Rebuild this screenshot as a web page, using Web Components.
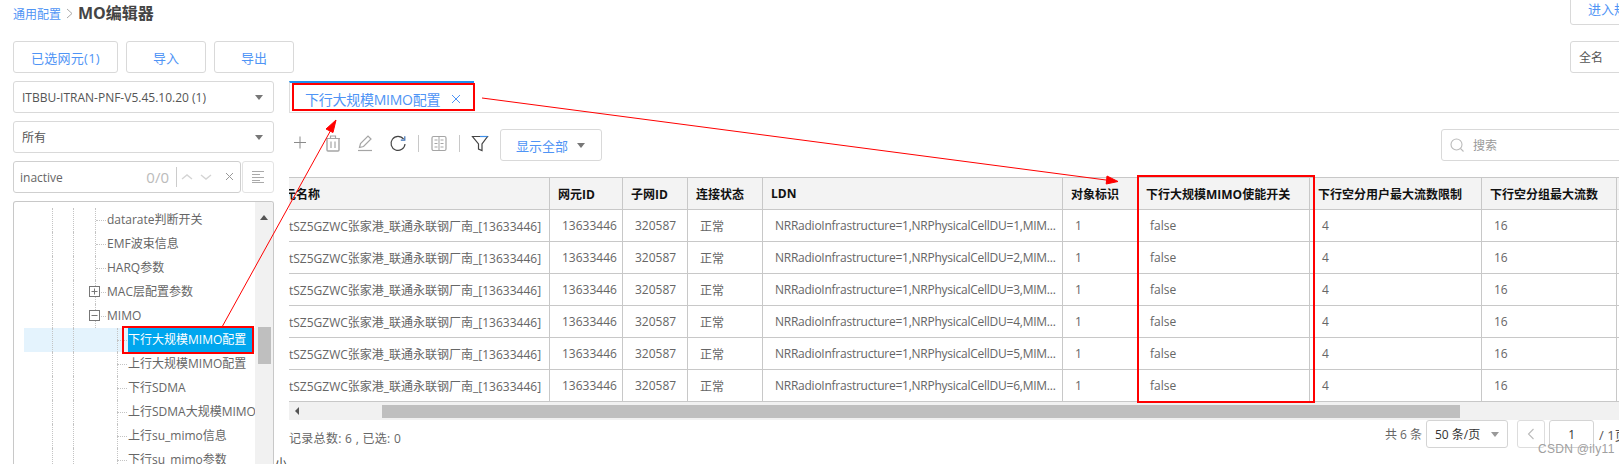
<!DOCTYPE html>
<html lang="zh">
<head>
<meta charset="utf-8">
<title>MO编辑器</title>
<style>
  html, body { margin: 0; height: 100%; overflow: hidden; background: #fff; }
  body { font: 12px "Open Sans", "Noto Sans CJK SC", sans-serif; color: #666; }
</style>
</head>
<body>
<mo-page></mo-page>
<script>
const FONT = `"Open Sans", "Noto Sans CJK SC", sans-serif`;
const BLUE = '#4f94f5';

class ToolButton extends HTMLElement {
  constructor() {
    super();
    this.attachShadow({ mode: 'open' });
    this.shadowRoot.innerHTML = `
      <style>
        :host {
          display: inline-flex;
          align-items: center;
          justify-content: center;
          box-sizing: border-box;
          height: 32px;
          border: 1px solid #d9d9d9;
          border-radius: 3px;
          color: ${BLUE};
          font-size: 13px;
          white-space: nowrap;
          background: #fff;
        }
      </style>
      <slot></slot>
    `;
  }
}
customElements.define('tool-button', ToolButton);

class DropSelect extends HTMLElement {
  constructor() {
    super();
    this.attachShadow({ mode: 'open' });
    this.shadowRoot.innerHTML = `
      <style>
        :host {
          display: flex;
          align-items: center;
          box-sizing: border-box;
          height: 32px;
          padding: 0 10px 0 8px;
          border: 1px solid #d9d9d9;
          border-radius: 3px;
          color: #555;
          font-size: 12px;
          background: #fff;
        }
        .text { flex: 1; white-space: nowrap; overflow: hidden; }
        .caret {
          width: 0; height: 0;
          border-left: 4px solid transparent;
          border-right: 4px solid transparent;
          border-top: 5px solid #777;
        }
      </style>
      <span class="text"><slot></slot></span>
      <span class="caret"></span>
    `;
  }
}
customElements.define('drop-select', DropSelect);

class FindBar extends HTMLElement {
  constructor() {
    super();
    this.attachShadow({ mode: 'open' });
    this.shadowRoot.innerHTML = `
      <style>
        :host { display: flex; gap: 1px; height: 32px; }
        .box {
          flex: 1;
          display: flex;
          align-items: center;
          box-sizing: border-box;
          padding-left: 6px;
          border: 1px solid #cfcfcf;
          border-radius: 3px;
          color: #666;
        }
        .word { flex: 1; }
        .count { color: #bbb; font-size: 15px; }
        .line { width: 1px; height: 20px; background: #ccc; margin: 0 0 0 7px; }
        svg { display: block; }
        .side {
          width: 32px;
          box-sizing: border-box;
          display: flex;
          align-items: center;
          justify-content: center;
          border: 1px solid #e3e3e3;
          border-radius: 3px;
        }
      </style>
      <div class="box">
        <span class="word">inactive</span>
        <span class="count">0/0</span>
        <span class="line"></span>
        <svg width="63" height="14" viewBox="0 0 63 14" fill="none" stroke-width="1.4">
          <path d="M5 9l5-4 5 4" stroke="#d4d4d4"/>
          <path d="M24 5l5 4 5-4" stroke="#d4d4d4"/>
          <path d="M49 3l7 7M56 3l-7 7" stroke="#999" stroke-width="1"/>
        </svg>
      </div>
      <div class="side">
        <svg width="14" height="12" viewBox="0 0 14 12" fill="none" stroke="#aaa">
          <path d="M1 .5h12M1 3.5h8M1 6.5h12M1 9.5h8M1 11.5h12"/>
        </svg>
      </div>
    `;
  }
}
customElements.define('find-bar', FindBar);

// rails = x positions of the dotted guides that pass through this row
class TreeRow extends HTMLElement {
  constructor() {
    super();
    this.attachShadow({ mode: 'open' });
  }

  connectedCallback() {
    const rails = (this.getAttribute('rails') || '').split(' ').filter(Boolean).map(Number);
    const indent = Number(this.getAttribute('indent') || 83);
    const expander = this.getAttribute('expander');
    const selected = this.hasAttribute('selected');
    const railHtml = rails.map(x => `<i class="rail" style="left:${x}px"></i>`).join('');
    const box = expander
      ? `<svg class="exp" style="left:${indent - 18}px" width="11" height="11" viewBox="0 0 11 11" fill="none" stroke="#777">
           <rect x=".5" y=".5" width="10" height="10"/>
           <path d="M2.5 5.5h6${expander === 'plus' ? 'M5.5 2.5v6' : ''}"/>
         </svg>`
      : '';
    this.shadowRoot.innerHTML = `
      <style>
        :host {
          display: flex;
          align-items: center;
          position: relative;
          height: 24px;
          padding-left: ${indent}px;
          box-sizing: border-box;
          white-space: nowrap;
          font-size: 12px;
          color: #666;
          ${selected ? 'background: #e4f3fd;' : ''}
        }
        .rail {
          position: absolute;
          top: 0; bottom: 0;
          border-left: 1px dotted #c4c4c4;
        }
        .join {
          position: absolute;
          left: ${indent - 11}px;
          width: 10px;
          top: 12px;
          border-top: 1px dotted #c4c4c4;
        }
        .exp { position: absolute; top: 6px; background: #fff; }
        .label { line-height: 24px; position: relative; }
        :host([selected]) .label { background: #00a6ee; color: #fff; width: 126px; }
      </style>
      ${railHtml}<i class="join"></i>${box}
      <span class="label"><slot></slot></span>
    `;
  }
}
customElements.define('tree-row', TreeRow);

class TreePanel extends HTMLElement {
  constructor() {
    super();
    this.attachShadow({ mode: 'open' });
    this.shadowRoot.innerHTML = `
      <style>
        :host {
          display: flex;
          box-sizing: border-box;
          height: 300px;
          border: 1px solid #c8c8c8;
          border-bottom: 0;
          border-radius: 3px 3px 0 0;
          overflow: hidden;
        }
        .rows { flex: 1; min-width: 0; padding: 6px 0 0 10px; overflow: hidden; }
        .track {
          width: 18px;
          background: #f1f1f1;
          display: flex;
          flex-direction: column;
          align-items: center;
        }
        .up {
          margin-top: 13px;
          width: 0; height: 0;
          border-left: 4px solid transparent;
          border-right: 4px solid transparent;
          border-bottom: 5px solid #555;
        }
        .thumb { width: 13px; height: 37px; margin-top: 107px; background: #bfbfbf; }
      </style>
      <div class="rows"><slot></slot></div>
      <div class="track"><span class="up"></span><span class="thumb"></span></div>
    `;
  }
}
customElements.define('tree-panel', TreePanel);

class TabStrip extends HTMLElement {
  constructor() {
    super();
    this.attachShadow({ mode: 'open' });
    this.shadowRoot.innerHTML = `
      <style>
        :host {
          display: block;
          box-sizing: border-box;
          height: 32px;
          border-bottom: 1px solid #ddd;
        }
        .tab {
          display: flex;
          align-items: center;
          box-sizing: border-box;
          width: 185px;
          height: 31px;
          padding: 2px 0 0 15px;
          border-left: 1px solid #ddd;
          border-top: 2px solid #1e90f0;
          color: ${BLUE};
          font-size: 14px;
          letter-spacing: -.25px;
          white-space: nowrap;
        }
        svg { margin-left: 11px; }
      </style>
      <div class="tab">
        <slot></slot>
        <svg width="10" height="10" viewBox="0 0 10 10" fill="none" stroke="${BLUE}" stroke-width="1">
          <path d="M1 1l8 8M9 1l-8 8"/>
        </svg>
      </div>
    `;
  }
}
customElements.define('tab-strip', TabStrip);

class ActionBar extends HTMLElement {
  constructor() {
    super();
    this.attachShadow({ mode: 'open' });
    this.shadowRoot.innerHTML = `
      <style>
        :host {
          display: flex;
          align-items: center;
          height: 32px;
          padding-left: 2px;
        }
        svg { display: block; width: 18px; height: 18px; margin-top: -4px; flex: none; }
        .gap { margin-left: 14.5px; }
        .bar { width: 1px; height: 17px; margin: -4px 11px 0; background: #c8c8c8; flex: none; }
        tool-button { width: 102px; flex: none; gap: 9px; }
        .caret {
          width: 0; height: 0;
          border-left: 4px solid transparent;
          border-right: 4px solid transparent;
          border-top: 5px solid #777;
        }
        .search {
          display: flex;
          align-items: center;
          flex: none;
          box-sizing: border-box;
          width: 230px;
          height: 32px;
          margin-left: auto;
          margin-right: -52px;
          padding-left: 8px;
          gap: 8px;
          border: 1px solid #d9d9d9;
          border-radius: 3px;
          color: #999;
          font-size: 12px;
        }
        .search svg { margin: 0; width: 15px; height: 15px; }
      </style>
      <svg viewBox="0 0 18 18" fill="none" stroke="#8a8a8a" stroke-width="1"><path d="M9 2.5v12M3 8.5h12"/></svg>
      <svg class="gap" viewBox="0 0 18 18" fill="none" stroke="#a5a5a5" stroke-width="1.2">
        <path d="M2 4.5h14M6.5 4.5v-2.5h5v2.5"/>
        <path d="M3 4.5v11.5a1 1 0 0 0 1 1h10a1 1 0 0 0 1-1V4.5" stroke-width="1.4"/>
        <path d="M7 7.5v6.5M11 7.5v6.5"/>
      </svg>
      <svg class="gap" viewBox="0 0 18 18" fill="none" stroke="#a5a5a5" stroke-width="1.2">
        <path d="M3.5 13.5l1-4L12 2l3 3-7.5 7.5z"/>
        <path d="M2 16.5h14"/>
      </svg>
      <svg class="gap" viewBox="0 0 18 18" fill="none" stroke="#444" stroke-width="1.2">
        <path d="M14.6 5.2A7 7 0 1 0 16 10"/>
        <path d="M15.8 2.2v4h-4" stroke="#3b6fb5"/>
      </svg>
      <span class="bar"></span>
      <svg viewBox="0 0 18 18" fill="none" stroke="#a5a5a5" stroke-width="1">
        <rect x="2" y="2.5" width="14" height="14" rx="1.5" stroke-width="1.2"/>
        <path d="M9 2.5v14M4.5 6h3M4.5 9.5h3M4.5 13h3M10.5 6h3M10.5 9.5h3M10.5 13h3"/>
      </svg>
      <span class="bar"></span>
      <svg viewBox="0 0 18 18" fill="none" stroke="#444" stroke-width="1.2">
        <path d="M1.5 2.5h15L11 10v6.5l-3.5-1.5v-5z"/>
        <path d="M16.5 2.5H9" stroke="#3f8fe8"/>
      </svg>
      <tool-button style="margin-left:11px">显示全部<span class="caret"></span></tool-button>
      <div class="search">
        <svg viewBox="0 0 15 15" fill="none" stroke="#bbb" stroke-width="1.1">
          <circle cx="6.5" cy="6.5" r="5.5"/><path d="M10.5 10.5l3 3"/>
        </svg>
        <span>搜索</span>
      </div>
    `;
  }
}
customElements.define('action-bar', ActionBar);

const COLS = [
  ['网元名称', 261], ['网元ID', 73], ['子网ID', 65], ['连接状态', 75], ['LDN', 300], ['对象标识', 75],
  ['下行大规模MIMO使能开关', 172], ['下行空分用户最大流数限制', 172], ['下行空分组最大流数', 135], ['', 120]
];

class DataTable extends HTMLElement {
  constructor() {
    super();
    this.attachShadow({ mode: 'open' });
  }

  connectedCallback() {
    const colgroup = COLS.map(c => `<col style="width:${c[1]}px">`).join('');
    const head = COLS.map(c => `<th>${c[0]}</th>`).join('');
    let body = '';
    for (let i = 1; i <= 6; i++) {
      body += `<tr>
        <td class="name">tSZ5GZWC张家港_联通永联钢厂南_[13633446]</td>
        <td>13633446</td><td>320587</td><td>正常</td>
        <td class="ldn">NRRadioInfrastructure=1,NRPhysicalCellDU=${i},MIM...</td>
        <td>1</td><td>false</td><td>4</td><td>16</td><td></td>
      </tr>`;
    }
    this.shadowRoot.innerHTML = `
      <style>
        :host { display: block; overflow: hidden; }
        table {
          border-collapse: separate;
          border-spacing: 0;
          table-layout: fixed;
          width: 1448px;
          font-size: 12px;
        }
        th, td {
          box-sizing: border-box;
          overflow: hidden;
          white-space: nowrap;
          text-align: left;
          border-right: 1px solid #c8c8c8;
          border-bottom: 1px solid #c8c8c8;
        }
        th {
          height: 33px;
          padding: 0 0 0 8px;
          border-top: 1px solid #c8c8c8;
          background: #f3f3f3;
          color: #111;
          font-weight: 700;
        }
        th:first-child { padding: 0; text-indent: -17px; }
        td { height: 32px; padding: 0 0 0 12px; color: #666; }
        td.name { padding: 0; }
        td.ldn { letter-spacing: -.25px; }
      </style>
      <table>
        <colgroup>${colgroup}</colgroup>
        <thead><tr>${head}</tr></thead>
        <tbody>${body}</tbody>
      </table>
    `;
  }
}
customElements.define('data-table', DataTable);

class HScrollbar extends HTMLElement {
  constructor() {
    super();
    this.attachShadow({ mode: 'open' });
    this.shadowRoot.innerHTML = `
      <style>
        :host {
          display: flex;
          align-items: center;
          height: 18px;
          background: #f1f1f1;
        }
        .left {
          margin-left: 6px;
          width: 0; height: 0;
          border-top: 4px solid transparent;
          border-bottom: 4px solid transparent;
          border-right: 4px solid #555;
        }
        .thumb { margin-left: 83px; width: 1078px; height: 13px; background: #bfbfbf; }
      </style>
      <span class="left"></span><span class="thumb"></span>
    `;
  }
}
customElements.define('h-scrollbar', HScrollbar);

class PagerBar extends HTMLElement {
  constructor() {
    super();
    this.attachShadow({ mode: 'open' });
    this.shadowRoot.innerHTML = `
      <style>
        :host {
          display: flex;
          align-items: center;
          height: 28px;
          font-size: 12px;
          color: #666;
          white-space: nowrap;
        }
        .total { margin-top: 7px; font-size: 12px; letter-spacing: .3px; }
        .right { margin-left: auto; margin-right: -20px; display: flex; align-items: center; width: 254px; }
        .cell {
          box-sizing: border-box;
          height: 28px;
          display: flex;
          align-items: center;
          justify-content: center;
          border: 1px solid #ddd;
          border-radius: 3px;
          flex: none;
        }
        .size { width: 82px; margin-left: 4px; gap: 11px; color: #333; border-color: #d4d4d4; }
        .caret {
          width: 0; height: 0;
          border-left: 4px solid transparent;
          border-right: 4px solid transparent;
          border-top: 5px solid #999;
        }
        .prev { width: 28px; margin-left: 9px; }
        .page { width: 45px; margin-left: 4px; color: #333; border-color: #d4d4d4; }
        .of { margin-left: 5px; color: #555; font-size: 13px; }
      </style>
      <span class="total">记录总数: 6 , 已选: 0</span>
      <div class="right">
        <span>共 6 条</span>
        <span class="cell size">50 条/页<span class="caret"></span></span>
        <span class="cell prev">
          <svg width="8" height="12" viewBox="0 0 8 12" fill="none" stroke="#bbb" stroke-width="1.1"><path d="M6.5 1L1.5 6l5 5"/></svg>
        </span>
        <span class="cell page">1</span>
        <span class="of">/ 1页</span>
      </div>
    `;
  }
}
customElements.define('pager-bar', PagerBar);

// the red boxes and arrows somebody drew on top of the screenshot
class MarkLayer extends HTMLElement {
  constructor() {
    super();
    this.attachShadow({ mode: 'open' });
    this.shadowRoot.innerHTML = `
      <style>
        :host { position: absolute; inset: 0; pointer-events: none; }
        svg { display: block; }
      </style>
      <svg width="1619" height="464" viewBox="0 0 1619 464" fill="none" stroke="#f00">
        <rect x="293" y="84" width="181" height="26" stroke-width="2"/>
        <rect x="123" y="327" width="130" height="26" stroke-width="2"/>
        <rect x="1138" y="176" width="176" height="226" stroke-width="2"/>
        <path d="M222 327L332 128"/>
        <path d="M336 120l-10 9 7 3.5z" fill="#f00"/>
        <path d="M482 98L1106 180"/>
        <path d="M1118 181.5l-11-5.5-.8 8z" fill="#f00"/>
      </svg>
    `;
  }
}
customElements.define('mark-layer', MarkLayer);

class MoPage extends HTMLElement {
  constructor() {
    super();
    this.attachShadow({ mode: 'open' });
    this.shadowRoot.innerHTML = `
      <style>
        :host {
          display: block;
          position: relative;
          width: 1619px;
          height: 464px;
          overflow: hidden;
          font-family: ${FONT};
          font-size: 12px;
          color: #666;
        }
        .crumbs {
          display: flex;
          align-items: center;
          height: 25px;
          padding-left: 13px;
          white-space: nowrap;
        }
        .crumbs a { color: ${BLUE}; margin-top: 3px; }
        .crumbs .sep { margin: 2px 0 0 0; width: 17px; display: flex; justify-content: center; }
        .crumbs b { font-size: 16px; color: #444; line-height: 24px; }
        .crumbs tool-button { margin: -8px -60px 0 auto; width: 109px; justify-content: flex-start; padding-left: 17px; }
        .actions {
          display: flex;
          align-items: center;
          gap: 8px;
          height: 32px;
          margin-top: 16px;
          padding-left: 13px;
        }
        .actions drop-select { margin-left: auto; width: 100px; margin-right: -51px; }
        .main {
          display: grid;
          grid-template-columns: 261px 1330px;
          column-gap: 15px;
          margin-top: 8px;
          padding-left: 13px;
        }
        .left { display: flex; flex-direction: column; gap: 8px; }
        .right { min-width: 0; }
        action-bar { margin-top: 16px; }
        data-table { margin-top: 16px; }
        .tiny { position: absolute; left: 275px; top: 454px; font-size: 12px; color: #444; }
        .stamp {
          position: absolute;
          left: 1538px;
          top: 442px;
          font: 12px "Liberation Sans", sans-serif;
          letter-spacing: .3px;
          color: #a0a0a0;
        }
      </style>
      <div class="crumbs">
        <a>通用配置</a>
        <span class="sep"><svg width="7" height="11" viewBox="0 0 7 11" fill="none" stroke="#aaa"><path d="M1 1l5 4.5L1 10"/></svg></span>
        <b>MO编辑器</b>
        <tool-button>进入规</tool-button>
      </div>
      <div class="actions">
        <tool-button style="width:105px;letter-spacing:.25px">已选网元(1)</tool-button>
        <tool-button style="width:80px">导入</tool-button>
        <tool-button style="width:80px">导出</tool-button>
        <drop-select>全名</drop-select>
      </div>
      <div class="main">
        <div class="left">
          <drop-select>ITBBU-ITRAN-PNF-V5.45.10.20 (1)</drop-select>
          <drop-select>所有</drop-select>
          <find-bar></find-bar>
          <tree-panel>
            <tree-row rails="28 49 71">datarate判断开关</tree-row>
            <tree-row rails="28 49 71">EMF波束信息</tree-row>
            <tree-row rails="28 49 71">HARQ参数</tree-row>
            <tree-row rails="28 49 71" expander="plus">MAC层配置参数</tree-row>
            <tree-row rails="28 49 71" expander="minus">MIMO</tree-row>
            <tree-row rails="28 49 93" indent="104" selected>下行大规模MIMO配置</tree-row>
            <tree-row rails="28 49 93" indent="104">上行大规模MIMO配置</tree-row>
            <tree-row rails="28 49 93" indent="104">下行SDMA</tree-row>
            <tree-row rails="28 49 93" indent="104">上行SDMA大规模MIMO配置</tree-row>
            <tree-row rails="28 49 93" indent="104">上行su_mimo信息</tree-row>
            <tree-row rails="28 49 93" indent="104">下行su_mimo参数</tree-row>
          </tree-panel>
        </div>
        <div class="right">
          <tab-strip>下行大规模MIMO配置</tab-strip>
          <action-bar></action-bar>
          <data-table></data-table>
          <h-scrollbar></h-scrollbar>
          <pager-bar></pager-bar>
        </div>
      </div>
      <span class="tiny">小</span>
      <span class="stamp">CSDN @ily11</span>
      <mark-layer></mark-layer>
    `;
  }
}
customElements.define('mo-page', MoPage);
</script>
</body>
</html>
